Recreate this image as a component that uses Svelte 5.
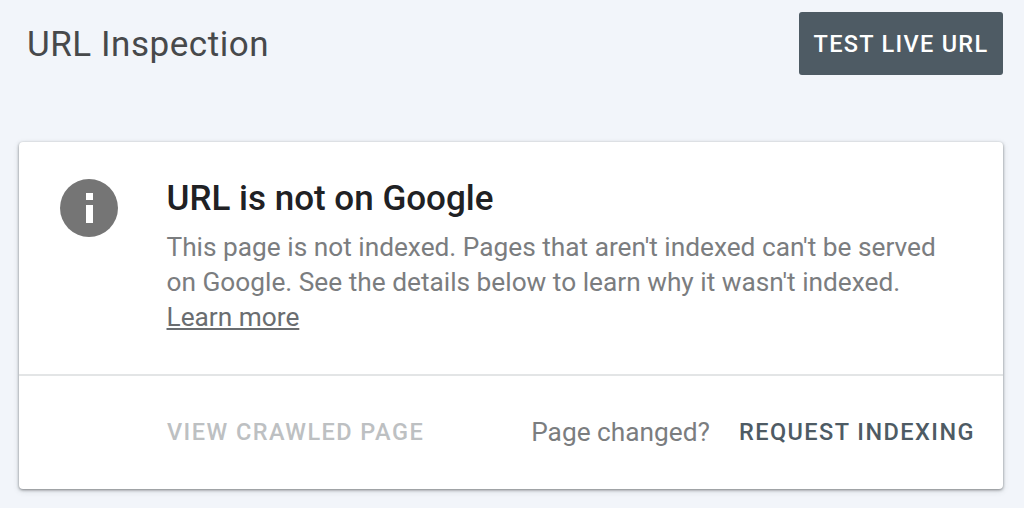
<script lang="ts">
    const title = 'URL Inspection';
</script>

<div class="page">
    <header class="top">
        <h1>{title}</h1>
        <button class="live">TEST LIVE URL</button>
    </header>

    <section class="card">
        <div class="status">
            <svg class="icon" viewBox="0 0 58 58" aria-hidden="true">
                <circle cx="29" cy="29" r="29" fill="#757575" />
                <rect x="26" y="14" width="7" height="7" fill="#fff" />
                <rect x="26" y="26" width="7" height="18" fill="#fff" />
            </svg>
            <div class="copy">
                <h2>URL is not on Google</h2>
                <p>
                    This page is not indexed. Pages that aren't indexed can't be served<br />
                    on Google. See the details below to learn why it wasn't indexed.<br />
                    <a href="#learn">Learn more</a>
                </p>
            </div>
        </div>
        <div class="actions">
            <span class="crawled">VIEW CRAWLED PAGE</span>
            <div class="request">
                <span class="changed">Page changed?</span>
                <span class="index">REQUEST INDEXING</span>
            </div>
        </div>
    </section>
</div>

<style>
    :global(body) {
        margin: 0;
        background: #f2f5fa;
    }

    .page {
        width: 1024px;
        height: 508px;
        box-sizing: border-box;
        padding: 12px 21px 0 19px;
        font-family: Roboto, "Liberation Sans", sans-serif;
        overflow: hidden;
    }

    .top {
        display: flex;
        justify-content: space-between;
        align-items: flex-start;
        height: 130px;
    }

    h1 {
        margin: 12px 0 0 8px;
        font-size: 35px;
        line-height: 42px;
        font-weight: 400;
        letter-spacing: 0.55px;
        color: #47494b;
    }

    .live {
        width: 204px;
        height: 63px;
        padding: 0;
        border: none;
        border-radius: 3px;
        background: #4e5b64;
        color: #fff;
        font-family: inherit;
        font-size: 23.5px;
        font-weight: 500;
        letter-spacing: 1.3px;
    }

    .card {
        height: 347px;
        background: #fff;
        border-radius: 4px;
        box-shadow: 0 1px 3px rgba(60, 64, 67, 0.6), 0 2px 6px rgba(60, 64, 67, 0.15);
        display: flex;
        flex-direction: column;
    }

    .status {
        height: 234px;
        box-sizing: border-box;
        border-bottom: 2px solid #e3e5e6;
        display: flex;
        padding: 37px 0 0 41px;
        gap: 48.5px;
    }

    .icon {
        width: 58px;
        height: 58px;
        flex: none;
    }

    h2 {
        margin: 0;
        font-size: 35px;
        line-height: 40px;
        font-weight: 500;
        color: #202124;
    }

    p {
        margin: 11px 0 0;
        font-size: 26.25px;
        line-height: 35px;
        color: #7b7d7f;
    }

    a {
        color: #6a6d70;
    }

    .actions {
        flex: 1;
        display: flex;
        align-items: center;
        justify-content: space-between;
        padding: 0 28px 2px 148px;
    }

    .crawled,
    .index {
        font-size: 23.5px;
        font-weight: 500;
        letter-spacing: 1.45px;
    }

    .crawled {
        color: #bdc0c2;
    }

    .request {
        display: flex;
        align-items: center;
        gap: 29px;
    }

    .changed {
        font-size: 26.25px;
        color: #7b7d7f;
    }

    .index {
        color: #4e5b64;
    }
</style>
